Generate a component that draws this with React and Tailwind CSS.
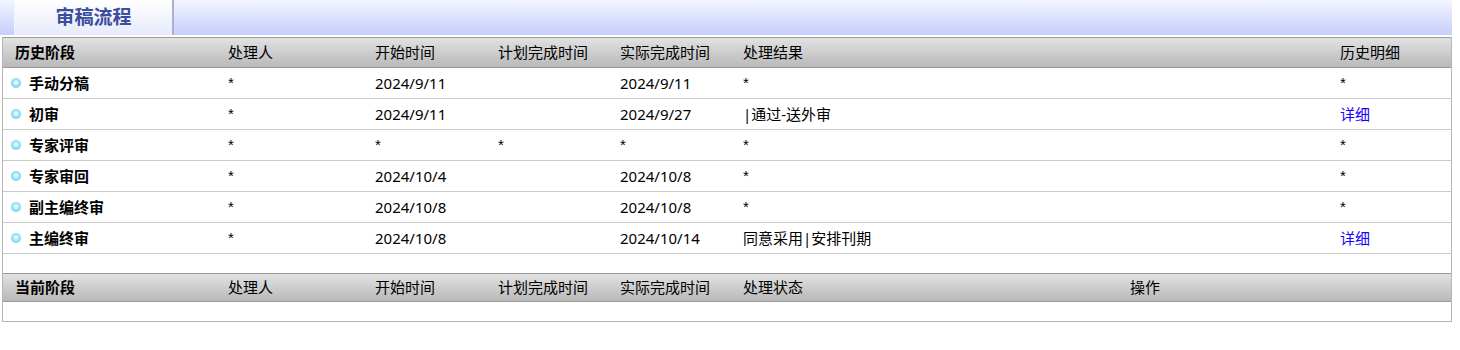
import React from 'react';

const history = [
  { stage: '手动分稿', who: '*', start: '2024/9/11', plan: '', done: '2024/9/11', result: '*', detail: '*' },
  { stage: '初审', who: '*', start: '2024/9/11', plan: '', done: '2024/9/27', result: '|通过-送外审', detail: 'link' },
  { stage: '专家评审', who: '*', start: '*', plan: '*', done: '*', result: '*', detail: '*' },
  { stage: '专家审回', who: '*', start: '2024/10/4', plan: '', done: '2024/10/8', result: '*', detail: '*' },
  { stage: '副主编终审', who: '*', start: '2024/10/8', plan: '', done: '2024/10/8', result: '*', detail: '*' },
  { stage: '主编终审', who: '*', start: '2024/10/8', plan: '', done: '2024/10/14', result: '同意采用|安排刊期', detail: 'link' },
];

// shared column widths for both tables
const histCols = 'grid grid-cols-[213px_147px_123px_122px_123px_597px_1fr]';
const curCols = 'grid grid-cols-[213px_147px_123px_122px_123px_387px_1fr]';

const headBar =
  'border-y border-[#9a9a9a] bg-gradient-to-b from-[#e2e2e2] to-[#b9b9b9] items-center';

const Dot = () => (
  <span className="inline-block w-[10px] h-[10px] rounded-full bg-[radial-gradient(circle_at_50%_45%,#ffffff_0%,#c6effd_25%,#6fd0f4_70%,#4fc0ee_100%)]" />
);

// the masked values use a small, raised asterisk
const Cell = ({ v }) =>
  v === '*' ? <span style={{ fontFamily: '"Liberation Sans", sans-serif' }}>*</span> : v;

const App = () => {
  return (
    <div
      className="w-[1460px] h-[350px] bg-white text-[15px] text-black"
      style={{ fontFamily: '"Noto Sans", "Noto Sans CJK SC", sans-serif' }}
    >
      {/* title band with tab */}
      <div className="w-[1452px] h-[35px] bg-gradient-to-b from-[#f3f5ff] to-[#c6cefb] flex">
        <div className="ml-[14px] w-[160px] h-full border-l border-[#f4f6ff] border-r-2 border-r-[#aeb2c8] bg-gradient-to-b from-[#ffffff] to-[#e6eafb] flex items-center justify-center">
          <span className="text-[19px] font-bold text-[#3c4c9e]">审稿流程</span>
        </div>
      </div>

      <div className="ml-[2px] mt-[2px] w-[1450px] border-x border-b border-[#b5b5b5]">
        {/* history header */}
        <div className={`${histCols} ${headBar} h-[31px]`}>
          <div className="pl-3 font-bold">历史阶段</div>
          <div className="pl-3">处理人</div>
          <div className="pl-3">开始时间</div>
          <div className="pl-3">计划完成时间</div>
          <div className="pl-3">实际完成时间</div>
          <div className="pl-3">处理结果</div>
          <div className="pl-3">历史明细</div>
        </div>

        {history.map((r) => (
          <div key={r.stage} className={`${histCols} h-[31px] items-center border-b border-[#cbcbcb]`}>
            <div className="pl-2 flex items-center gap-[8px] font-bold">
              <Dot />
              <span>{r.stage}</span>
            </div>
            <div className="pl-3"><Cell v={r.who} /></div>
            <div className="pl-3"><Cell v={r.start} /></div>
            <div className="pl-3"><Cell v={r.plan} /></div>
            <div className="pl-3"><Cell v={r.done} /></div>
            <div className="pl-3"><Cell v={r.result} /></div>
            <div className="pl-3">
              {r.detail === 'link' ? (
                <a href="#" className="text-[#1a00ff]">详细</a>
              ) : (
                <Cell v={r.detail} />
              )}
            </div>
          </div>
        ))}

        <div className="h-[19px]" />

        {/* current stage header */}
        <div className={`${curCols} ${headBar} h-[29px]`}>
          <div className="pl-3 font-bold">当前阶段</div>
          <div className="pl-3">处理人</div>
          <div className="pl-3">开始时间</div>
          <div className="pl-3">计划完成时间</div>
          <div className="pl-3">实际完成时间</div>
          <div className="pl-3">处理状态</div>
          <div className="pl-3">操作</div>
        </div>

        <div className="h-[19px]" />
      </div>
    </div>
  );
};

export default App;
